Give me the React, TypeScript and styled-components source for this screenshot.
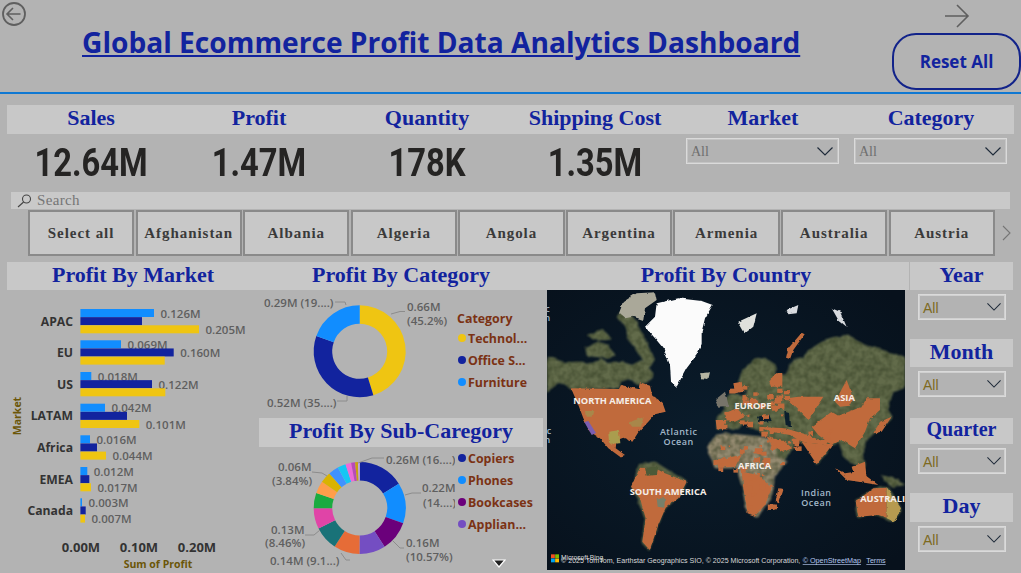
import React from 'react';
import styled, { createGlobalStyle } from 'styled-components';

const GlobalStyle = createGlobalStyle`
  html, body {
    margin: 0;
    padding: 0;
    background: #b3b3b3;
  }
`;

const Page = styled.div`
  width: 1021px;
  height: 573px;
  overflow: hidden;
  background: #b3b3b3;
  font-family: 'Open Sans', 'Liberation Sans', sans-serif;
`;

const Header = styled.header`
  display: flex;
  height: 92px;
  border-bottom: 2px solid #0f78d2;
  box-sizing: content-box;
`;

const BackButton = styled.div`
  width: 26px;
  height: 26px;
  margin: 1px 0 0 1px;
  color: #5f5f5f;
`;

const Title = styled.h1`
  margin: 22px 0 0 55px;
  width: 810px;
  font-size: 28.15px;
  line-height: 40px;
  font-weight: 700;
  color: #12239e;
  text-decoration: underline;
  white-space: nowrap;
`;

const HeaderRight = styled.div`
  display: flex;
  flex-direction: column;
  align-items: center;
  margin-left: auto;
  width: 129px;
`;

const ForwardButton = styled.div`
  width: 26px;
  height: 26px;
  margin-top: 3px;
  color: #5f5f5f;
`;

const ResetButton = styled.button`
  width: 129px;
  height: 57px;
  margin-top: 4px;
  padding: 0;
  border: 2px solid #12238a;
  border-radius: 24px;
  background: transparent;
  font-family: 'Open Sans', 'Liberation Sans', sans-serif;
  font-size: 17px;
  font-weight: 700;
  color: #12239e;
`;

const KpiStrip = styled.div`
  display: grid;
  grid-template-columns: repeat(6, 168px);
  height: 29px;
  margin: 11px 0 0 7px;
  width: 1007px;
  background: #c8c8c8;
`;

const SectionHeading = styled.div<{ $size?: number }>`
  display: flex;
  align-items: center;
  justify-content: center;
  padding-bottom: 3px;
  box-sizing: border-box;
  font-family: 'Liberation Serif', serif;
  font-size: ${(p) => p.$size ?? 22}px;
  font-weight: 700;
  color: #12239e;
  white-space: nowrap;
`;

const KpiValues = styled.div`
  display: grid;
  grid-template-columns: repeat(6, 168px);
  height: 58px;
  margin-left: 7px;
`;

const KpiValue = styled.div`
  padding-top: 7px;
  text-align: center;
  font-family: 'Roboto', 'Liberation Sans', sans-serif;
  font-size: 38px;
  line-height: 44px;
  font-weight: 700;
  color: #252423;
  transform: scaleX(0.86);
`;

const FilterCell = styled.div`
  padding: 4px 8px 0 7px;
`;

const Dropdown = styled.div<{ $sans?: boolean }>`
  display: flex;
  align-items: center;
  justify-content: space-between;
  box-sizing: border-box;
  height: 26px;
  padding: 2px ${(p) => (p.$sans ? 4 : 5)}px 0 4px;
  border: 1px solid #dadada;
  outline: 1px solid ${(p) => (p.$sans ? '#d0d0d0' : '#c4c4c4')};
  outline-offset: -2px;
  font-family: ${(p) => (p.$sans ? "'Liberation Sans', sans-serif" : "'Liberation Serif', serif")};
  font-size: 14px;
  color: ${(p) => (p.$sans ? '#7d6a1f' : '#6f6f6f')};
`;

const Chevron = styled.svg<{ $small?: boolean }>`
  flex: none;
  width: ${(p) => (p.$small ? 14 : 16)}px;
  height: ${(p) => (p.$small ? 8 : 9)}px;
  margin-top: -2px;
`;

const SearchBar = styled.div`
  display: flex;
  align-items: center;
  gap: 5px;
  box-sizing: border-box;
  width: 999px;
  height: 17px;
  margin-left: 11px;
  padding-left: 6px;
  background: #c9c9c9;
  font-family: 'Liberation Serif', serif;
  font-size: 15px;
  letter-spacing: 0.35px;
  color: #757575;
`;

const SlicerRow = styled.div`
  display: flex;
  align-items: center;
  height: 46px;
  margin: 1px 0 0 28px;
  gap: 1.4px;
`;

const SlicerButton = styled.div`
  display: flex;
  align-items: center;
  justify-content: center;
  flex: none;
  box-sizing: border-box;
  width: 106.2px;
  height: 46px;
  border: 2px solid #8a8a8a;
  background: #c8c8c8;
  font-family: 'Liberation Serif', serif;
  font-size: 15px;
  font-weight: 700;
  letter-spacing: 0.95px;
  color: #3a3a3a;
`;

const SlicerNext = styled.svg`
  flex: none;
  width: 9px;
  height: 16px;
  margin-left: 6px;
`;

const Lower = styled.div`
  display: grid;
  grid-template-columns: 252px 288px 362px 104px;
  margin: 6px 0 0 7px;
`;

const Column = styled.section`
  min-width: 0;
`;

const PanelHeading = styled(SectionHeading)<{ $inset?: number }>`
  height: 28px;
  padding-right: ${(p) => p.$inset ?? 0}px;
  background: #c8c8c8;
`;

const DrawnChart = styled.svg`
  display: block;
  flex: none;
`;

const DonutRow = styled.div`
  display: flex;
  height: 128px;
`;

const SubHeading = styled(SectionHeading)`
  width: 284px;
  height: 29px;
  background: #c8c8c8;
`;

const Legend = styled.div<{ $top: number }>`
  padding-top: ${(p) => p.$top}px;
  position: relative;
`;

const LegendTitle = styled.div`
  height: 18px;
  margin-left: 2px;
  font-size: 12.4px;
  line-height: 20px;
  font-weight: 700;
  color: #7b3214;
`;

const LegendItem = styled.div`
  display: flex;
  align-items: center;
  gap: 2px;
  height: 22px;
  font-size: 12.4px;
  font-weight: 700;
  color: #7b3214;
  white-space: nowrap;
`;

const LegendDot = styled.span<{ $color: string }>`
  width: 8px;
  height: 8px;
  margin-left: 3px;
  border-radius: 50%;
  background: ${(p) => p.$color};
`;

const MoreMarker = styled.svg`
  position: absolute;
  left: 37px;
  top: 112px;
  width: 14px;
  height: 9px;
`;

const MapFrame = styled.svg`
  display: block;
  width: 358px;
  height: 280px;
`;

const SideColumn = styled.aside`
  margin-left: 1px;
  display: flex;
  flex-direction: column;
`;

const SideGroup = styled.div<{ $titleHeight: number; $height: number }>`
  height: ${(p) => p.$height}px;

  & > div:first-child {
    height: ${(p) => p.$titleHeight}px;
    background: #c8c8c8;
  }
`;

const SideFilter = styled.div`
  width: 88px;
  margin: 4px 0 0 8px;
`;

const ValueLabel = styled.text`
  font-family: 'Open Sans', 'Liberation Sans', sans-serif;
  font-size: 11.5px;
  font-weight: 600;
  fill: #5f5f5f;
  dominant-baseline: central;
`;

const AxisLabel = styled.text<{ $size?: number }>`
  font-family: 'Open Sans', 'Liberation Sans', sans-serif;
  font-size: ${(p) => p.$size ?? 13}px;
  font-weight: 700;
  fill: #333333;
  dominant-baseline: central;
`;

const AxisTitle = styled.text`
  font-family: 'Open Sans', 'Liberation Sans', sans-serif;
  font-size: 10.5px;
  font-weight: 700;
  fill: #6b5608;
  dominant-baseline: central;
  text-anchor: middle;
`;

const Leader = styled.polyline`
  fill: none;
  stroke: #8c8c8c;
  stroke-width: 1;
`;

const PlaceName = styled.text<{ $ocean?: boolean }>`
  font-family: 'Open Sans', 'Liberation Sans', sans-serif;
  font-size: ${(p) => (p.$ocean ? 27 : 28)}px;
  font-weight: ${(p) => (p.$ocean ? 600 : 700)};
  fill: ${(p) => (p.$ocean ? '#a3b8c9' : '#f6eee8')};
  text-anchor: middle;
  letter-spacing: ${(p) => (p.$ocean ? 1.5 : 0)}px;
`;

const MapCredit = styled.text<{ $link?: boolean }>`
  font-family: 'Liberation Sans', sans-serif;
  font-size: 20px;
  fill: ${(p) => (p.$link ? '#b6c8f0' : '#d8d8d8')};
  text-decoration: ${(p) => (p.$link ? 'underline' : 'none')};
`;

const BLUE = '#118dff';
const NAVY = '#12239e';
const YELLOW = '#efc512';

type BarGroup = {
  name: string;
  top: number;
  ends: [number, number, number];
  labels: [string?, string?, string?];
};

const markets: BarGroup[] = [
  { name: 'APAC', top: 309, ends: [154, 142, 199], labels: ['0.126M', undefined, '0.205M'] },
  { name: 'EU', top: 340.3, ends: [121, 173.7, 164.7], labels: ['0.069M', '0.160M'] },
  { name: 'US', top: 372, ends: [91.3, 152, 165.3], labels: ['0.018M', '0.122M'] },
  { name: 'LATAM', top: 403.7, ends: [105, 127, 139.3], labels: ['0.042M', undefined, '0.101M'] },
  { name: 'Africa', top: 435.3, ends: [90, 97, 106], labels: ['0.016M', undefined, '0.044M'] },
  { name: 'EMEA', top: 467, ends: [87.3, 89.3, 91], labels: ['0.012M', undefined, '0.017M'] },
  { name: 'Canada', top: 498.3, ends: [82, 85.7, 85], labels: ['0.003M', undefined, '0.007M'] },
];

const ProfitByMarket = () => (
  <DrawnChart width={252} height={283} viewBox="7 290 252 283">
    {markets.map((m) => (
      <g key={m.name}>
        <AxisLabel $size={12.2} x={73} y={m.top + 12} textAnchor="end">{m.name}</AxisLabel>
        {[BLUE, NAVY, YELLOW].map((color, i) => {
          const y = m.top + i * 8.15;
          const label = m.labels[i];
          return (
            <g key={color}>
              <rect x={80.4} y={y} width={m.ends[i] - 80.4} height={8} fill={color} />
              {label && <ValueLabel x={m.ends[i] + 6.5} y={y + 4}>{label}</ValueLabel>}
            </g>
          );
        })}
      </g>
    ))}
    <AxisTitle x={0} y={0} transform="translate(17 416) rotate(-90)">Market</AxisTitle>
    <AxisLabel x={81} y={547} textAnchor="middle">0.00M</AxisLabel>
    <AxisLabel x={139} y={547} textAnchor="middle">0.10M</AxisLabel>
    <AxisLabel x={197} y={547} textAnchor="middle">0.20M</AxisLabel>
    <AxisTitle x={158} y={564}>Sum of Profit</AxisTitle>
  </DrawnChart>
);

type Slice = { share: number; color: string };

const Donut = ({ cx, cy, slices }: { cx: number; cy: number; slices: Slice[] }) => {
  const total = slices.reduce((sum, s) => sum + s.share, 0);
  const outer = 46;
  const inner = 27.5;
  let angle = 0;
  const point = (r: number, a: number) =>
    `${(cx + r * Math.sin(a)).toFixed(2)} ${(cy - r * Math.cos(a)).toFixed(2)}`;
  return (
    <>
      {slices.map((s) => {
        const from = angle;
        angle += (s.share / total) * Math.PI * 2;
        const large = angle - from > Math.PI ? 1 : 0;
        const d = `M${point(outer, from)} A${outer} ${outer} 0 ${large} 1 ${point(outer, angle)} L${point(inner, angle)} A${inner} ${inner} 0 ${large} 0 ${point(inner, from)} Z`;
        return <path key={s.color} d={d} fill={s.color} />;
      })}
    </>
  );
};

const categorySlices: Slice[] = [
  { share: 45.2, color: YELLOW },
  { share: 35.2, color: NAVY },
  { share: 19.6, color: BLUE },
];

const subCategorySlices: Slice[] = [
  { share: 16.2, color: NAVY },
  { share: 14.2, color: BLUE },
  { share: 10.57, color: '#6b007b' },
  { share: 9.2, color: '#744ec2' },
  { share: 9.1, color: '#e66c37' },
  { share: 8.46, color: '#197278' },
  { share: 7.3, color: '#e044a7' },
  { share: 5.4, color: '#1aab40' },
  { share: 4.4, color: '#ff9e4a' },
  { share: 3.84, color: '#d9b300' },
  { share: 3.6, color: '#4092ff' },
  { share: 2.9, color: '#15c6f4' },
  { share: 2, color: '#ed6bd8' },
  { share: 1.4, color: '#b84bb8' },
  { share: 1, color: '#c8a010' },
  { share: 0.6, color: '#c4a8e8' },
];

const ProfitByCategory = () => (
  <DrawnChart width={196} height={128} viewBox="259 290 196 128">
    <Donut cx={359.7} cy={351.3} slices={categorySlices} />
    <Leader points="391,314 400,311.5 405,311.5" />
    <Leader points="346,305 345,302 335,302" />
    <Leader points="347,396 347,401 337,401" />
    <ValueLabel x={407} y={306}>0.66M</ValueLabel>
    <ValueLabel x={407} y={320}>(45.2%)</ValueLabel>
    <ValueLabel x={264} y={302}>0.29M (19....)</ValueLabel>
    <ValueLabel x={267} y={402}>0.52M (35....)</ValueLabel>
  </DrawnChart>
);

const ProfitBySubCategory = () => (
  <DrawnChart width={196} height={126} viewBox="259 447 196 126">
    <Donut cx={359.7} cy={508} slices={subCategorySlices} />
    <Leader points="358,463 372,458 384,458" />
    <Leader points="405,495 412,493 421,493" />
    <Leader points="392,540 400,548 404,548" />
    <Leader points="320,530 314,535 305,535" />
    <Leader points="341,553 346,560 350,560" />
    <Leader points="327,476 322,473 312,472" />
    <ValueLabel x={386} y={459}>0.26M (16....)</ValueLabel>
    <ValueLabel x={422} y={487}>0.22M</ValueLabel>
    <ValueLabel x={423} y={502}>(14....)</ValueLabel>
    <ValueLabel x={406} y={542}>0.16M</ValueLabel>
    <ValueLabel x={406} y={556}>(10.57%)</ValueLabel>
    <ValueLabel x={271} y={529}>0.13M</ValueLabel>
    <ValueLabel x={265} y={542}>(8.46%)</ValueLabel>
    <ValueLabel x={270} y={560}>0.14M (9.1...)</ValueLabel>
    <ValueLabel x={278} y={466}>0.06M</ValueLabel>
    <ValueLabel x={272} y={480}>(3.84%)</ValueLabel>
  </DrawnChart>
);

// land outlines traced in map coordinates (3x page pixels)
const OLIVE_LAND = [
  'M6 215 L60 232 L115 230 L125 240 L170 222 L195 235 L235 232 L262 240 L290 225 L325 262 L322 282 L300 292 L278 300 L260 285 L228 285 L222 312 L78 312 L40 290 L6 325 Z',
  'M118 190 L160 170 L190 180 L212 215 L170 218 L130 212 Z',
  'M125 150 L175 135 L200 160 L160 165 Z',
  'M215 95 L245 70 L275 110 L300 165 L330 225 L310 258 L285 210 L255 175 L240 130 Z',
  'M580 292 L590 260 L625 225 L660 218 L692 240 L690 268 L720 268 L745 225 L775 220 L790 195 L850 160 L905 150 L960 180 L1010 195 L1080 215 L1080 310 L1045 320 L1030 370 L1042 395 L1000 440 L970 460 L950 510 L962 548 L930 540 L900 520 L880 470 L860 482 L815 540 L785 480 L750 465 L745 490 L720 525 L690 525 L665 455 L640 435 L610 432 L625 420 L600 410 L580 432 L540 432 L515 430 L515 400 L540 375 L530 350 L560 325 L600 330 L610 305 L595 320 Z',
  'M1010 570 L1060 585 L1080 600 L1045 605 L1020 590 Z',
  'M930 650 L985 610 L1030 605 L1068 670 L1045 712 L1000 690 L940 695 Z',
  'M282 535 L330 530 L425 590 L400 640 L360 670 L340 720 L312 795 L290 770 L300 700 L262 610 Z',
];

const AFRICA = 'M488 490 L510 450 L545 445 L600 450 L650 455 L680 470 L695 510 L725 530 L690 575 L680 640 L635 695 L605 680 L590 600 L575 550 L510 550 Z';

const ORANGE_REGIONS = [
  'M78 310 L222 312 L228 300 L280 312 L285 292 L315 302 L322 332 L352 352 L362 380 L330 388 L310 410 L280 442 L262 470 L235 458 L215 466 L212 490 L240 510 L225 515 L190 490 L165 460 L135 440 L115 400 L100 360 Z',
  'M285 548 L330 550 L360 565 L425 590 L400 640 L362 668 L340 720 L314 795 L292 770 L302 700 L285 640 L258 605 Z',
  'M800 425 L860 380 L880 392 L950 365 L965 340 L1005 340 L1005 375 L975 400 L960 440 L930 490 L890 465 L860 480 L820 450 Z',
  'M870 350 L905 285 L925 340 L915 362 L885 365 Z',
  'M770 470 L860 482 L815 538 Z',
  'M932 650 L985 610 L1025 608 L1025 698 L1000 690 L940 695 Z',
  'M723 218 L730 190 L770 143 L779 148 L745 195 L735 222 Z',
  'M670 295 L690 265 L712 265 L712 305 L685 305 Z',
  'M725 340 L760 335 L835 335 L790 405 L750 365 Z',
  'M540 385 L575 370 L600 395 L570 410 L545 405 Z',
  'M512 405 L545 405 L530 432 L515 430 Z',
  'M640 425 L720 430 L790 450 L860 482 L770 470 L735 450 L680 440 Z',
  'M665 455 L720 470 L742 490 L715 500 L680 480 Z',
  'M630 490 L650 490 L652 510 L628 505 Z',
  'M590 560 L640 570 L680 610 L660 660 L630 692 L608 685 L595 610 Z',
  'M510 525 L590 510 L570 545 L520 548 Z',
  'M565 295 L590 290 L595 320 L570 325 Z',
  'M870 550 L905 585 L940 590 L1000 600 L960 570 L930 560 L900 565 Z',
  'M920 545 L960 530 L965 580 L930 580 Z',
  'M1005 410 L1040 395 L1010 440 L985 445 Z',
  'M700 610 L716 612 L702 655 L692 650 Z',
];

// scattered admin areas that break up Europe, Africa and the Gulf
const scatter = (x: number, y: number, w: number, h: number, count: number, seed: number) => {
  let s = seed;
  const next = () => {
    s = (s * 16807) % 2147483647;
    return (s % 1000) / 1000;
  };
  return Array.from({ length: count }, () => ({
    x: x + next() * w,
    y: y + next() * h,
    size: 7 + next() * 14,
  }));
};

const orangeSpecks = [
  ...scatter(530, 300, 190, 120, 34, 11),
  ...scatter(500, 470, 210, 85, 18, 29),
  ...scatter(585, 560, 100, 120, 14, 47),
  ...scatter(640, 420, 220, 70, 22, 71),
];

const WorldMap = () => (
  <MapFrame viewBox="6 15 1074 840">
    <defs>
      <filter id="coast" x="-5%" y="-5%" width="110%" height="110%" colorInterpolationFilters="sRGB">
        <feTurbulence type="fractalNoise" baseFrequency="0.04" numOctaves="3" seed="4" result="warp" />
        <feDisplacementMap in="SourceGraphic" in2="warp" scale="12" xChannelSelector="R" yChannelSelector="G" result="shape" />
        <feGaussianBlur in="shape" stdDeviation="2.6" result="soft" />
        <feTurbulence type="fractalNoise" baseFrequency="0.05" numOctaves="2" seed="2" result="grain" />
        <feColorMatrix in="grain" type="matrix" values="0 0 0 0 0.2  0 0 0 0 0.24  0 0 0 0 0.14  1.1 0 0 0 -0.35" result="spots" />
        <feComposite in="spots" in2="soft" operator="in" result="mottled" />
        <feMerge>
          <feMergeNode in="soft" />
          <feMergeNode in="mottled" />
        </feMerge>
      </filter>
      <filter id="ice" x="-5%" y="-5%" width="110%" height="110%" colorInterpolationFilters="sRGB">
        <feTurbulence type="fractalNoise" baseFrequency="0.04" numOctaves="3" seed="7" result="warp" />
        <feDisplacementMap in="SourceGraphic" in2="warp" scale="10" xChannelSelector="R" yChannelSelector="G" result="shape" />
        <feGaussianBlur in="shape" stdDeviation="2.2" />
      </filter>
      <filter id="patchy" x="-5%" y="-5%" width="110%" height="110%" colorInterpolationFilters="sRGB">
        <feTurbulence type="fractalNoise" baseFrequency="0.08" numOctaves="2" seed="9" result="warp" />
        <feDisplacementMap in="SourceGraphic" in2="warp" scale="9" xChannelSelector="R" yChannelSelector="G" result="shape" />
        <feGaussianBlur in="shape" stdDeviation="2.2" />
      </filter>
      <radialGradient id="ocean" cx="45%" cy="50%" r="70%">
        <stop offset="0" stopColor="#0a1c2b" />
        <stop offset="1" stopColor="#07111c" />
      </radialGradient>
    </defs>
    <rect x="6" y="15" width="1074" height="840" fill="url(#ocean)" />
    <g filter="url(#coast)">
      {OLIVE_LAND.map((d) => (
        <path key={d} d={d} fill="#626b4a" />
      ))}
      <path d={AFRICA} fill="#93896f" />
    </g>
    <g filter="url(#ice)">
      <path d="M636 395 L672 388 L680 408 L640 412 Z" fill="#0b1e2c" />
      <path d="M718 380 L735 385 L738 425 L722 420 Z" fill="#0b1e2c" />
      <path d="M580 110 L635 85 L625 125 L600 145 Z" fill="#dfe0dc" />
      <path d="M860 70 L885 80 L905 125 L880 105 Z" fill="#d8dade" />
      <path d="M725 75 L760 60 L755 85 L730 88 Z" fill="#d8dade" />
      <path d="M465 265 L495 262 L490 282 L470 280 Z" fill="#b5b5a2" />
      <path d="M510 345 L540 320 L552 365 L520 368 Z" fill="#77746a" />
      <path d="M235 50 L275 25 L330 22 L335 45 L300 70 L295 105 L265 95 L240 100 L222 85 Z" fill="#aaa899" />
      <path d="M300 125 L330 95 L335 55 L400 40 L470 48 L503 60 L480 100 L470 140 L470 180 L455 210 L425 250 L395 305 L378 290 L375 240 L355 190 L330 160 Z" fill="#fbfbfb" />
    </g>
    <g filter="url(#patchy)" fill="#c06a3c">
      {ORANGE_REGIONS.map((d) => (
        <path key={d} d={d} />
      ))}
      {orangeSpecks.map((b) => (
        <rect key={`${b.x}-${b.y}`} x={b.x} y={b.y} width={b.size} height={b.size * 0.8} />
      ))}
    </g>
    <g filter="url(#patchy)">
      <path d="M190 440 L222 436 L226 475 L192 476 Z" fill="#aa9d4e" />
      <path d="M252 412 L296 396 L288 425 L258 425 Z" fill="#a8874a" />
      <path d="M120 378 L145 378 L140 395 L122 395 Z" fill="#a8874a" />
      <path d="M1025 606 L1068 670 L1048 710 L1025 700 Z" fill="#b69a50" />
      <path d="M300 548 L340 545 L335 570 L305 572 Z" fill="#4d5a38" />
      <path d="M335 640 L360 640 L358 668 L338 665 Z" fill="#77806a" />
    </g>
    <path d="M118 411 L130 408 L153 444 L140 450 Z" fill="#7c5eb0" />
    <PlaceName x={202} y={356}>NORTH AMERICA</PlaceName>
    <PlaceName x={624} y={371}>EUROPE</PlaceName>
    <PlaceName x={898} y={347}>ASIA</PlaceName>
    <PlaceName x={629} y={553}>AFRICA</PlaceName>
    <PlaceName x={369} y={630}>SOUTH AMERICA</PlaceName>
    <PlaceName x={1013} y={650}>AUSTRALI</PlaceName>
    <PlaceName $ocean x={401} y={451}>Atlantic</PlaceName>
    <PlaceName $ocean x={401} y={480}>Ocean</PlaceName>
    <PlaceName $ocean x={814} y={634}>Indian</PlaceName>
    <PlaceName $ocean x={814} y={663}>Ocean</PlaceName>
    <PlaceName $ocean x={8} y={82}>c</PlaceName>
    <PlaceName $ocean x={8} y={108}>n</PlaceName>
    <PlaceName $ocean x={8} y={446}>ic</PlaceName>
    <PlaceName $ocean x={8} y={474}>n</PlaceName>
    <rect x="18" y="808" width="11.5" height="11.5" fill="#f25022" />
    <rect x="30.5" y="808" width="11.5" height="11.5" fill="#7fba00" />
    <rect x="18" y="820.5" width="11.5" height="11.5" fill="#00a4ef" />
    <rect x="30.5" y="820.5" width="11.5" height="11.5" fill="#ffb900" />
    <MapCredit x={48} y={824}>Microsoft Bing</MapCredit>
    <MapCredit x={48} y={834} textLength={718} lengthAdjust="spacingAndGlyphs">© 2025 TomTom, Earthstar Geographics SIO, © 2025 Microsoft Corporation,</MapCredit>
    <MapCredit $link x={773} y={834} textLength={175} lengthAdjust="spacingAndGlyphs">© OpenStreetMap</MapCredit>
    <MapCredit $link x={964} y={834} textLength={58} lengthAdjust="spacingAndGlyphs">Terms</MapCredit>
  </MapFrame>
);

const DownChevron = ({ small }: { small?: boolean }) => (
  <Chevron $small={small} viewBox="0 0 16 9" preserveAspectRatio="none">
    <polyline points="0.5,0.5 8,8 15.5,0.5" fill="none" stroke="#1f2b3a" strokeWidth="1.2" />
  </Chevron>
);

const kpis = [
  { label: 'Sales', value: '12.64M' },
  { label: 'Profit', value: '1.47M' },
  { label: 'Quantity', value: '178K' },
  { label: 'Shipping Cost', value: '1.35M' },
];

const countries = ['Select all', 'Afghanistan', 'Albania', 'Algeria', 'Angola', 'Argentina', 'Armenia', 'Australia', 'Austria'];

const sideFilters = [
  { label: 'Year', titleHeight: 28, height: 77, size: 22 },
  { label: 'Month', titleHeight: 28, height: 79, size: 22 },
  { label: 'Quarter', titleHeight: 26, height: 75, size: 20 },
  { label: 'Day', titleHeight: 29, height: 80, size: 22 },
];

const categoryLegend = [
  { name: 'Technol...', color: YELLOW },
  { name: 'Office S...', color: NAVY },
  { name: 'Furniture', color: BLUE },
];

const subCategoryLegend = [
  { name: 'Copiers', color: NAVY },
  { name: 'Phones', color: BLUE },
  { name: 'Bookcases', color: '#6b007b' },
  { name: 'Applian...', color: '#744ec2' },
];

const App: React.FC = () => (
  <Page>
    <GlobalStyle />
    <Header>
      <BackButton>
        <svg width="26" height="26" viewBox="0 0 26 26" fill="none" stroke="currentColor">
          <circle cx="13" cy="13" r="11" strokeWidth="1.8" />
          <path d="M19.5 13 H6.5 M12 7 L6 13 L12 19" strokeWidth="1.6" />
        </svg>
      </BackButton>
      <Title>Global Ecommerce Profit Data Analytics Dashboard</Title>
      <HeaderRight>
        <ForwardButton>
          <svg width="26" height="26" viewBox="0 0 26 26" fill="none" stroke="currentColor" strokeWidth="1.6">
            <path d="M1 13 H24 M13 2 L24 13 L13 24" />
          </svg>
        </ForwardButton>
        <ResetButton>Reset All</ResetButton>
      </HeaderRight>
    </Header>

    <KpiStrip>
      {kpis.map((k) => (
        <SectionHeading key={k.label}>{k.label}</SectionHeading>
      ))}
      <SectionHeading>Market</SectionHeading>
      <SectionHeading>Category</SectionHeading>
    </KpiStrip>
    <KpiValues>
      {kpis.map((k) => (
        <KpiValue key={k.label}>{k.value}</KpiValue>
      ))}
      <FilterCell>
        <Dropdown>All<DownChevron /></Dropdown>
      </FilterCell>
      <FilterCell>
        <Dropdown>All<DownChevron /></Dropdown>
      </FilterCell>
    </KpiValues>

    <SearchBar>
      <svg width="15" height="14" viewBox="0 0 15 14" fill="none" stroke="#444" strokeWidth="1.1">
        <circle cx="9.5" cy="5" r="4" />
        <path d="M6.6 8 L1 13" />
      </svg>
      Search
    </SearchBar>
    <SlicerRow>
      {countries.map((c) => (
        <SlicerButton key={c}>{c}</SlicerButton>
      ))}
      <SlicerNext viewBox="0 0 9 16">
        <polyline points="1,1 8,8 1,15" fill="none" stroke="#757575" strokeWidth="1.1" />
      </SlicerNext>
    </SlicerRow>

    <Lower>
      <Column>
        <PanelHeading>Profit By Market</PanelHeading>
        <ProfitByMarket />
      </Column>
      <Column>
        <PanelHeading $inset={4}>Profit By Category</PanelHeading>
        <DonutRow>
          <ProfitByCategory />
          <Legend $top={19}>
            <LegendTitle>Category</LegendTitle>
            {categoryLegend.map((l) => (
              <LegendItem key={l.name}><LegendDot $color={l.color} />{l.name}</LegendItem>
            ))}
          </Legend>
        </DonutRow>
        <SubHeading>Profit By Sub-Caregory</SubHeading>
        <DonutRow>
          <ProfitBySubCategory />
          <Legend $top={0}>
            {subCategoryLegend.map((l) => (
              <LegendItem key={l.name}><LegendDot $color={l.color} />{l.name}</LegendItem>
            ))}
            <MoreMarker viewBox="0 0 14 9">
              <path d="M1 1 H13 L7 8 Z" fill="#222" stroke="#fff" strokeWidth="1.2" />
            </MoreMarker>
          </Legend>
        </DonutRow>
      </Column>
      <Column>
        <PanelHeading $inset={4}>Profit By Country</PanelHeading>
        <WorldMap />
      </Column>
      <SideColumn>
        {sideFilters.map((f) => (
          <SideGroup key={f.label} $titleHeight={f.titleHeight} $height={f.height}>
            <SectionHeading $size={f.size}>{f.label}</SectionHeading>
            <SideFilter>
              <Dropdown $sans>All<DownChevron small /></Dropdown>
            </SideFilter>
          </SideGroup>
        ))}
      </SideColumn>
    </Lower>
  </Page>
);

export default App;
